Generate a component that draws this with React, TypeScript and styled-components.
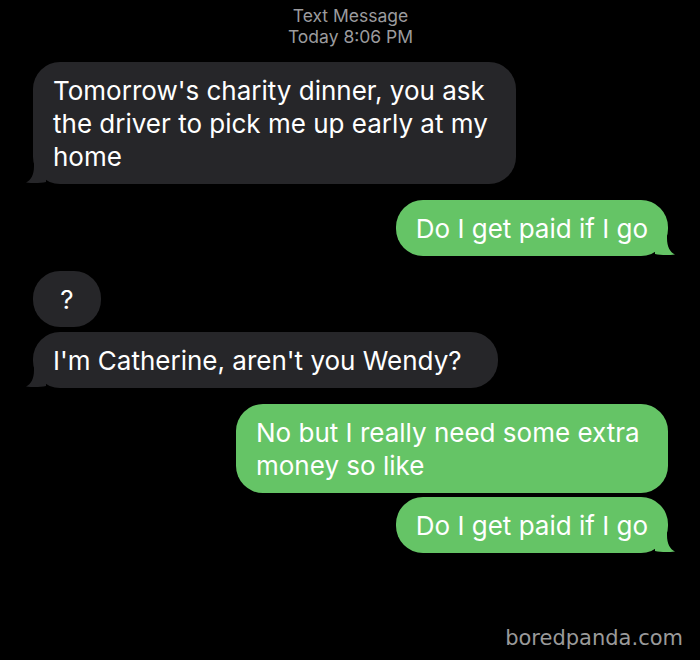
import React from 'react';
import styled, { createGlobalStyle } from 'styled-components';

const GlobalStyle = createGlobalStyle`
  html, body {
    margin: 0;
    padding: 0;
    background: #000;
  }
`;

const Screen = styled.div`
  width: 700px;
  height: 660px;
  background: #000;
  font-family: Inter, "Liberation Sans", sans-serif;
  display: flex;
  flex-direction: column;
  padding: 5px 32px 0 33px;
  box-sizing: border-box;
  overflow: hidden;
`;

const Header = styled.div`
  text-align: center;
  color: #9b9b9e;
  font-size: 17.5px;
  line-height: 21px;
  margin-bottom: 15px;
`;

const Thread = styled.div`
  display: flex;
  flex-direction: column;
`;

const Row = styled.div<{ $sent?: boolean; $gap: number }>`
  display: flex;
  justify-content: ${({ $sent }) => ($sent ? 'flex-end' : 'flex-start')};
  margin-top: ${({ $gap }) => $gap}px;
`;

const Bubble = styled.div<{ $sent?: boolean; $width?: number }>`
  position: relative;
  background: ${({ $sent }) => ($sent ? '#65c466' : '#262629')};
  color: #fff;
  font-size: 26px;
  line-height: 33px;
  padding: 12px 20px 11px 20px;
  border-radius: 27px;
  width: ${({ $width }) => ($width ? `${$width}px` : 'auto')};
  box-sizing: border-box;
`;

const QuestionBubble = styled(Bubble)`
  text-align: center;
  padding-left: 0;
  padding-right: 0;
`;

const Tail = styled.svg<{ $sent?: boolean }>`
  position: absolute;
  bottom: 0;
  width: 22px;
  height: 22px;
  ${({ $sent }) => ($sent ? 'right: -9px; transform: scaleX(-1);' : 'left: -9px;')}
`;

const Watermark = styled.div`
  margin-top: auto;
  align-self: flex-end;
  color: #9a9a9a;
  font-family: "DejaVu Sans", sans-serif;
  font-size: 21px;
  margin-right: -15px;
  margin-bottom: 10px;
`;

type Msg = { text: string; sent?: boolean; tail?: boolean; gap: number; width?: number; short?: boolean };

const messages: Msg[] = [
  { text: "Tomorrow's charity dinner, you ask the driver to pick me up early at my home", tail: true, gap: 0, width: 483 },
  { text: 'Do I get paid if I go', sent: true, tail: true, gap: 16 },
  { text: '?', gap: 15, width: 68, short: true },
  { text: "I'm Catherine, aren't you Wendy?", tail: true, gap: 5, width: 465 },
  { text: 'No but I really need some extra money so like', sent: true, gap: 16, width: 432 },
  { text: 'Do I get paid if I go', sent: true, tail: true, gap: 4 },
];

const BubbleTail: React.FC<{ sent?: boolean }> = ({ sent }) => (
  <Tail $sent={sent} viewBox="0 0 22 22">
    <path
      d="M22 0 L22 20 C17 21 10 21.5 2 20.5 C7 18 10 13 10 4 L10 0 Z"
      fill={sent ? '#65c466' : '#262629'}
    />
  </Tail>
);

const App: React.FC = () => (
  <>
    <GlobalStyle />
    <Screen>
      <Header>
        Text Message
        <br />
        Today 8:06 PM
      </Header>
      <Thread>
        {messages.map((m, i) => {
          const Body = m.short ? QuestionBubble : Bubble;
          return (
            <Row key={i} $sent={m.sent} $gap={m.gap}>
              <Body $sent={m.sent} $width={m.width}>
                {m.text}
                {m.tail && <BubbleTail sent={m.sent} />}
              </Body>
            </Row>
          );
        })}
      </Thread>
      <Watermark>boredpanda.com</Watermark>
    </Screen>
  </>
);

export default App;
